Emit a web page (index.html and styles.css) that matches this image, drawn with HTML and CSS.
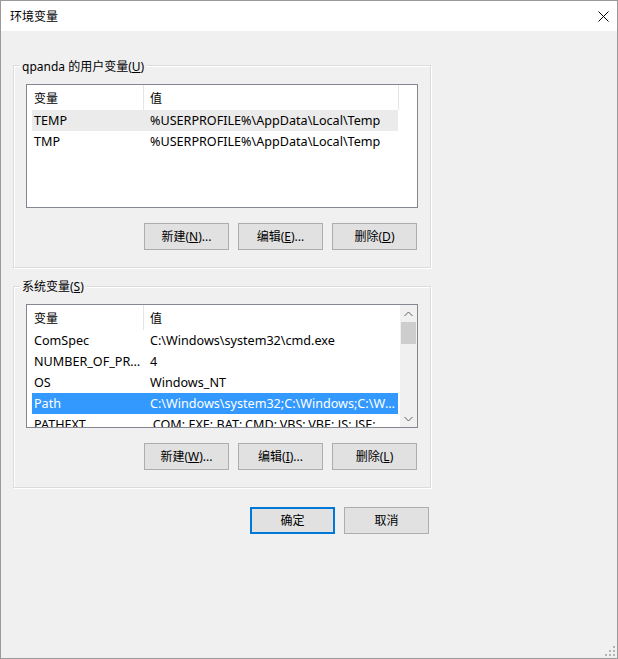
FILE: index.html
```html
<!DOCTYPE html>
<html lang="zh-CN">
<head>
<meta charset="utf-8">
<title>环境变量</title>
<link rel="stylesheet" href="styles.css">
</head>
<body>
<div class="window">
  <div class="titlebar">
    <span class="title">环境变量</span>
    <span class="close">
      <svg width="11" height="11" viewBox="0 0 11 11"><path d="M0.5 0.5 L10.5 10.5 M10.5 0.5 L0.5 10.5" stroke="#000" stroke-width="1" fill="none"/></svg>
    </span>
  </div>
  <div class="content">
    <div class="group g1">
      <div class="glabel">qpanda 的用户变量(<u>U</u>)</div>
      <div class="list">
        <div class="lmain">
          <div class="lhead"><div class="h1">变量</div><div class="h2">值</div></div>
          <div class="rows">
            <div class="row hover"><div class="c1">TEMP</div><div class="c2">%USERPROFILE%\AppData\Local\Temp</div></div>
            <div class="row"><div class="c1">TMP</div><div class="c2">%USERPROFILE%\AppData\Local\Temp</div></div>
          </div>
        </div>
      </div>
      <div class="btns">
        <button class="btn">新建(<u>N</u>)...</button>
        <button class="btn">编辑(<u>E</u>)...</button>
        <button class="btn">删除(<u>D</u>)</button>
      </div>
    </div>

    <div class="group g2">
      <div class="glabel">系统变量(<u>S</u>)</div>
      <div class="list">
        <div class="lmain">
          <div class="lhead"><div class="h1">变量</div><div class="h2 noline">值</div></div>
          <div class="rows">
            <div class="row"><div class="c1">ComSpec</div><div class="c2">C:\Windows\system32\cmd.exe</div></div>
            <div class="row"><div class="c1">NUMBER_OF_PROCESSORS</div><div class="c2">4</div></div>
            <div class="row"><div class="c1">OS</div><div class="c2">Windows_NT</div></div>
            <div class="row sel"><div class="c1">Path</div><div class="c2">C:\Windows\system32;C:\Windows;C:\Windows\System32\Wbem</div></div>
            <div class="row"><div class="c1">PATHEXT</div><div class="c2">.COM;.EXE;.BAT;.CMD;.VBS;.VBE;.JS;.JSE;.WSF;.WSH;.MSC</div></div>
          </div>
        </div>
        <div class="sb">
          <div class="sb-btn"><svg width="9" height="6" viewBox="0 0 9 6"><polyline points="0.5,5 4.5,1 8.5,5" stroke="#606060" stroke-width="1" fill="none"/></svg></div>
          <div class="sb-thumb"></div>
          <div class="sb-track"></div>
          <div class="sb-btn"><svg width="9" height="6" viewBox="0 0 9 6"><polyline points="0.5,1 4.5,5 8.5,1" stroke="#606060" stroke-width="1" fill="none"/></svg></div>
        </div>
      </div>
      <div class="btns">
        <button class="btn">新建(<u>W</u>)...</button>
        <button class="btn">编辑(<u>I</u>)...</button>
        <button class="btn">删除(<u>L</u>)</button>
      </div>
    </div>

    <div class="dlg-btns">
      <button class="btn default">确定</button>
      <button class="btn">取消</button>
    </div>

    <div class="grip">
      <svg width="12" height="12" viewBox="0 0 12 12" fill="#b4b4b4">
        <rect x="9" y="1" width="2" height="2"/>
        <rect x="9" y="5" width="2" height="2"/>
        <rect x="5" y="5" width="2" height="2"/>
        <rect x="9" y="9" width="2" height="2"/>
        <rect x="5" y="9" width="2" height="2"/>
        <rect x="1" y="9" width="2" height="2"/>
      </svg>
    </div>
  </div>
</div>
</body>
</html>
```

FILE: styles.css
```css
* { box-sizing: border-box; }
html, body { margin: 0; padding: 0; }
body {
  width: 618px;
  height: 659px;
  font-family: "Noto Sans", "Noto Sans CJK SC", sans-serif;
  font-size: 12px;
  color: #000;
  background: #f0f0f0;
}
.window {
  width: 618px;
  height: 659px;
  border: 1px solid #9a9a9a;
  background: #f0f0f0;
  display: flex;
  flex-direction: column;
}
.titlebar {
  height: 30px;
  flex: none;
  background: #fff;
  display: flex;
  align-items: center;
  justify-content: space-between;
  padding-left: 9px;
}
.title {
  font-family: "Noto Sans CJK SC", sans-serif;
  font-size: 12px;
  line-height: 16px;
  margin-top: -1px;
}
.close {
  width: 28px;
  height: 30px;
  display: flex;
  align-items: center;
  justify-content: center;
}
.content {
  flex: 1;
  display: flex;
  flex-direction: column;
  padding: 34px 0 0 12px;
}
.group {
  width: 418px;
  border: 1px solid #dcdcdc;
  box-shadow: inset 1px 1px 0 #fff, 1px 1px 0 #fff;
  padding: 0 12px 17px 12px;
}
.g2 { margin-top: 18px; }
.glabel {
  width: max-content;
  margin: -7px 0 0 -6px;
  padding: 0 2px;
  line-height: 16px;
  height: 16px;
  background: #f0f0f0;
}
.g2 .glabel { margin-top: -8px; }
.list {
  margin-top: 9px;
  width: 392px;
  height: 124px;
  border: 1px solid #828790;
  background: #fff;
  display: flex;
  overflow: hidden;
}
.lmain {
  flex: 1;
  min-width: 0;
  overflow: hidden;
}
.lhead {
  display: flex;
  height: 25px;
}
.h1, .h2 {
  line-height: 25px;
  padding-top: 1px;
  border-right: 1px solid #e5e5e5;
}
.h1 { width: 117px; padding-left: 7px; }
.h2 { width: 255px; padding-left: 6px; }
.h2.noline { border-right: none; }
.rows { padding-left: 5px; }
.row {
  display: flex;
  width: 366px;
  height: 21px;
  line-height: 21px;
  font-size: 12.6px;
}
.row.hover { background: #ebebeb; }
.row.sel { background: #3399ff; color: #fff; }
.c1, .c2 {
  white-space: nowrap;
  overflow: hidden;
  text-overflow: ellipsis;
}
.c1 { width: 111px; padding: 0 2px 0 2px; }
.c2 { width: 255px; padding: 0 2px 0 7px; }
.sb {
  width: 17px;
  flex: none;
  background: #f0f0f0;
  display: flex;
  flex-direction: column;
}
.sb-btn {
  height: 17px;
  display: flex;
  align-items: center;
  justify-content: center;
}
.sb-thumb {
  height: 22px;
  margin: 0 1px;
  background: #cdcdcd;
}
.sb-track { flex: 1; }
.btns {
  display: flex;
  justify-content: flex-end;
  gap: 9px;
  margin-top: 15px;
  padding-right: 1px;
}
.btn {
  width: 85px;
  height: 27px;
  margin: 0;
  padding: 0;
  border: 1px solid #adadad;
  background: #e1e1e1;
  font-family: "Noto Sans", "Noto Sans CJK SC", sans-serif;
  font-size: 12px;
  color: #000;
  line-height: 16px;
}
.btn.default { border: 2px solid #0078d7; }
.dlg-btns {
  width: 418px;
  display: flex;
  justify-content: flex-end;
  gap: 9px;
  margin-top: 19px;
  padding-right: 2px;
}
.grip {
  margin-top: auto;
  align-self: flex-end;
  margin-right: 1px;
  margin-bottom: 1px;
  height: 12px;
}
.grip svg { display: block; }
```
